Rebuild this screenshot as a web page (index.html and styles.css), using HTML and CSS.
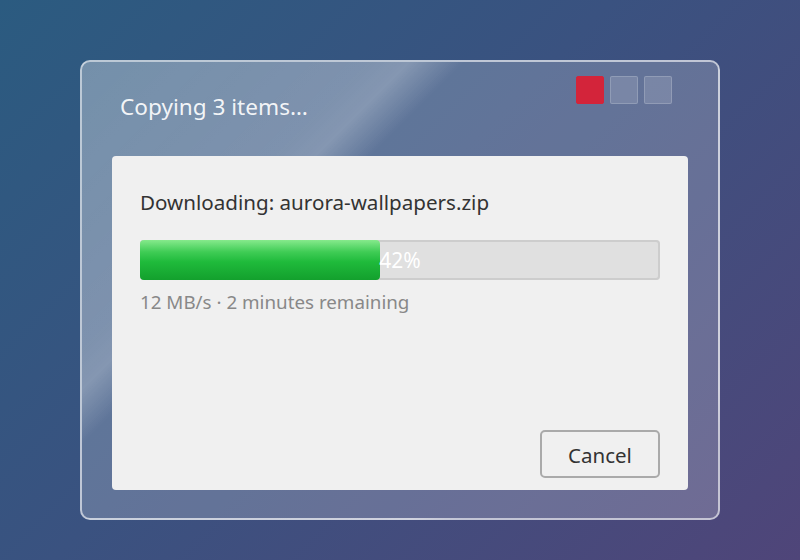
FILE: index.html
```html
<!DOCTYPE html>
<html lang="en">
<head>
    <meta charset="UTF-8">
    <meta name="viewport" content="width=device-width, initial-scale=1.0">
    <title>Copying 3 items</title>
    <link rel="stylesheet" href="styles.css">
</head>
<body>
    <div class="window">
        <div class="titlebar">
            <h1 class="title">Copying 3 items…</h1>
            <div class="controls">
                <span class="ctrl ctrl-close"></span>
                <span class="ctrl"></span>
                <span class="ctrl"></span>
            </div>
        </div>

        <div class="panel">
            <p class="filename">Downloading: aurora-wallpapers.zip</p>

            <div class="progress">
                <div class="progress-fill" style="width: 46.2%"></div>
                <span class="progress-label">42%</span>
            </div>

            <p class="status">12 MB/s · 2 minutes remaining</p>

            <button class="cancel-btn">Cancel</button>
        </div>
    </div>
</body>
</html>
```

FILE: styles.css
```css
body {
    margin: 0;
    height: 560px;
    font-family: "Noto Sans", "Open Sans", sans-serif;
    background: linear-gradient(135deg, #2b5b80 0%, #3a5280 45%, #4f4579 100%);
    display: flex;
    padding: 60px 0 0 80px;
    box-sizing: border-box;
    overflow: hidden;
}

.window {
    width: 640px;
    height: 460px;
    box-sizing: border-box;
    border: 2px solid rgba(255, 255, 255, 0.6);
    border-radius: 10px;
    background:
        linear-gradient(135deg,
            rgba(255, 255, 255, 0.17) 0%,
            rgba(255, 255, 255, 0.2) 26%,
            rgba(255, 255, 255, 0.24) 30%,
            rgba(255, 255, 255, 0) 35%,
            rgba(255, 255, 255, 0) 100%),
        rgba(255, 255, 255, 0.2);
    padding: 0 30px 28px;
    display: flex;
    flex-direction: column;
}

.titlebar {
    height: 94px;
    flex-shrink: 0;
    display: flex;
    justify-content: space-between;
    align-items: flex-start;
    padding: 14px 16px 0 8px;
    box-sizing: border-box;
}

.title {
    margin: 16px 0 0;
    font-size: 22.6px;
    font-weight: normal;
    line-height: 30px;
    color: rgba(255, 255, 255, 0.92);
}

.controls {
    display: flex;
    gap: 6px;
}

.ctrl {
    width: 28px;
    height: 28px;
    box-sizing: border-box;
    border-radius: 2px;
    background-color: rgba(255, 255, 255, 0.14);
    border: 1px solid rgba(255, 255, 255, 0.18);
}

.ctrl-close {
    background-color: #d3243a;
    border-color: #d3243a;
}

.panel {
    flex: 1;
    background-color: #f0f0f0;
    border-radius: 4px;
    padding: 32px 28px 12px;
    display: flex;
    flex-direction: column;
}

.filename {
    margin: 0;
    font-size: 20.6px;
    line-height: 28px;
    color: #333;
}

.progress {
    margin-top: 24px;
    height: 40px;
    display: grid;
    border-radius: 4px;
    background-color: #e0e0e0;
    box-shadow: inset 0 0 0 2px #cdcdcd;
}

.progress-fill,
.progress-label {
    grid-area: 1 / 1;
}

.progress-fill {
    border-radius: 4px;
    background: linear-gradient(#86ea8c 0%, #3fcc55 30%, #1fba3b 55%, #13a02d 100%);
}

.progress-label {
    justify-self: center;
    align-self: center;
    font-size: 21px;
    color: #fff;
}

.status {
    margin: 10px 0 0;
    font-size: 18.8px;
    line-height: 24px;
    color: #888;
}

.cancel-btn {
    margin-top: auto;
    align-self: flex-end;
    width: 120px;
    height: 48px;
    padding: 2px 0 0;
    font-family: inherit;
    font-size: 20.5px;
    color: #333;
    background-color: #f0f0f0;
    border: 2px solid #aaa;
    border-radius: 5px;
    cursor: pointer;
}

.cancel-btn:hover {
    background-color: #e6e6e6;
}
```
